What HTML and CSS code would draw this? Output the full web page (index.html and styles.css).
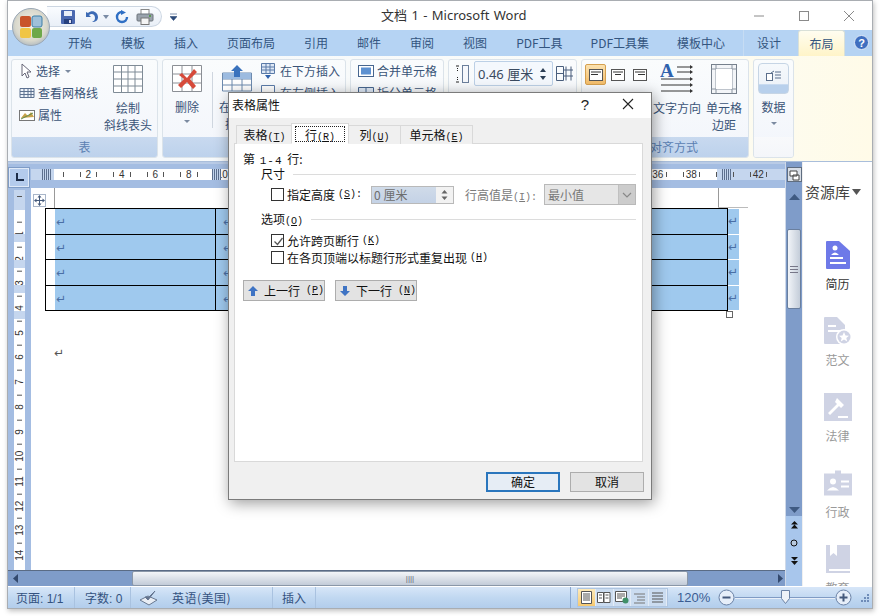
FILE: index.html
```html
<!DOCTYPE html>
<html lang="zh">
<head>
<meta charset="utf-8">
<title>文档 1 - Microsoft Word</title>
<link rel="stylesheet" href="styles.css">
</head>
<body>
<div class="win">
  <header class="title">
    <span class="title-text">文档 1 - Microsoft Word</span>
    <div class="wctl">
      <svg width="12" height="12" viewBox="0 0 12 12"><path d="M1 6h10" stroke="#8a8a8a"/></svg>
      <svg width="12" height="12" viewBox="0 0 12 12"><rect x="1.5" y="1.5" width="9" height="9" fill="none" stroke="#8a8a8a"/></svg>
      <svg width="12" height="12" viewBox="0 0 12 12"><path d="M1 1l10 10M11 1L1 11" stroke="#8a8a8a"/></svg>
    </div>
  </header>

  <div class="office">
    <svg width="38" height="38" viewBox="0 0 38 38">
      <defs><radialGradient id="ob" cx=".5" cy=".45" r=".6"><stop offset="0" stop-color="#f7f4ea"/><stop offset=".7" stop-color="#d9d8cc"/><stop offset="1" stop-color="#a9b4bd"/></radialGradient></defs>
      <circle cx="19" cy="19" r="18.5" fill="url(#ob)" stroke="#9aa7b5"/>
      <rect x="8" y="8" width="11" height="11" rx="2" fill="#c9542a"/>
      <rect x="20" y="8" width="10" height="11" rx="2" fill="#9fc0d8" stroke="#3d7fa8"/>
      <rect x="8" y="20" width="11" height="10" rx="2" fill="#f0c544"/>
      <rect x="20" y="20" width="10" height="10" rx="2" fill="#6ea84a"/>
    </svg>
  </div>
  <div class="qat">
    <svg width="16" height="16" viewBox="0 0 16 16"><rect x="1" y="1" width="14" height="14" rx="1" fill="#4a68b0"/><rect x="4" y="2" width="8" height="5" fill="#e8eef8"/><rect x="4" y="10" width="8" height="5" fill="#26407e"/><rect x="9" y="11" width="2" height="3" fill="#dde"/></svg>
    <svg width="16" height="14" viewBox="0 0 16 14"><path d="M3 2v5h5L6 5c3-2 6-.5 6 3 0 2-1 3-3 4 4 0 6-2 6-5C15 2 9-1 5 3z" fill="#3d6bb5"/></svg>
    <svg class="qat-d" width="6" height="4" viewBox="0 0 6 4"><path d="M0 0h6L3 4z" fill="#7a8ba5"/></svg>
    <svg width="14" height="14" viewBox="0 0 14 14"><path d="M7 2a5 5 0 1 0 5 5" fill="none" stroke="#2f6fc4" stroke-width="2.4"/><path d="M6 0l5 2.5L6 5z" fill="#2f6fc4"/></svg>
    <svg width="18" height="16" viewBox="0 0 18 16"><rect x="5" y="0.5" width="8" height="5" fill="#fff" stroke="#888"/><rect x="1" y="5" width="16" height="7" rx="1" fill="#9aa3ad" stroke="#6d747c"/><rect x="5" y="9" width="8" height="6.5" fill="#f4f4f4" stroke="#777"/><rect x="13" y="6" width="2" height="2" fill="#5a9a50"/></svg>
  </div>
  <svg class="qat-more" width="7" height="8" viewBox="0 0 7 8"><path d="M0 1h7M0 3.500h7L3.500 7.500z" fill="#2c4a78" stroke="#2c4a78" stroke-width=".6"/></svg>

  <nav class="tabs">
    <span class="tab">开始</span><span class="tab">模板</span><span class="tab">插入</span><span class="tab">页面布局</span><span class="tab">引用</span><span class="tab">邮件</span><span class="tab">审阅</span><span class="tab">视图</span><span class="tab t-pdf">PDF工具</span><span class="tab t-pdfs">PDF工具集</span><span class="tab t-tpl">模板中心</span>
    <span class="tab ctx">设计</span><span class="tab active">布局</span>
    <svg class="help" width="15" height="15" viewBox="0 0 15 15"><circle cx="7.500" cy="7.500" r="7" fill="#3f6fc0" stroke="#dfe9f7"/><text x="7.500" y="11.500" text-anchor="middle" class="help-q">?</text></svg>
  </nav>

  <section class="ribbon">
    <div class="grp g1">
      <div class="grp-body">
        <div class="col-small">
          <div class="sm"><svg width="14" height="16" viewBox="0 0 14 16"><path d="M3 1v12l3-3 2 5 2-1-2-5h4z" fill="#fff" stroke="#667"/></svg>选择 <i class="caret"></i></div>
          <div class="sm"><svg width="16" height="14" viewBox="0 0 16 14"><path d="M1 2.500h14v9H1zM5 2.500v9M9 2.500v9M12 2.500v9M1 5.500h14M1 8.500h14" fill="#eef3fa" stroke="#5d7291"/></svg>查看网格线</div>
          <div class="sm"><svg width="16" height="14" viewBox="0 0 16 14"><rect x=".5" y="2.500" width="15" height="10" fill="#fff" stroke="#777"/><path d="M2 10l4-5 3 3 3-4 3 5z" fill="#c9a24b"/><path d="M2 11l12-6" stroke="#5d8a4a"/></svg>属性</div>
        </div>
        <div class="big w-b1">
          <svg width="30" height="28" viewBox="0 0 30 28"><path d="M.5.500h29v27H.5zM8.500.500v27M15 .500v27M22 .500v27M.5 7h29M.5 14h29M.5 21h29" fill="#fff" stroke="#7f8b96"/></svg>
          <span class="big-l">绘制<br>斜线表头</span>
        </div>
      </div>
      <div class="foot">表</div>
    </div>

    <div class="grp g2">
      <div class="grp-body">
        <div class="big w-b2">
          <svg width="30" height="27" viewBox="0 0 30 27"><path d="M.5.500h29v26H.5zM10 .500v26M20 .500v26M.5 9h29M.5 18h29" fill="#fff" stroke="#8b8f95"/><path d="M10 8l5 5 7-9 3 3-7 7 6 7-3 3-6-7-6 6-3-3 6-6-5-4z" fill="#d64a3a"/></svg>
          <span class="big-l">删除</span>
          <i class="caret c-big"></i>
        </div>
        <div class="vsep"></div>
        <div class="big w-b3">
          <svg width="30" height="27" viewBox="0 0 30 27"><path d="M.5 8h29v18H.5zM10 8v18M20 8v18M.5 14h29M.5 20h29" fill="#fff" stroke="#6d8aae"/><rect x="1" y="8" width="28" height="6" fill="#9cbbe0"/><path d="M15 0l6 6h-3v6h-6V6H9z" fill="#3a72bd"/></svg>
          <span class="big-l">在上方<br>插入</span>
        </div>
        <div class="col-small c-ins">
          <div class="sm"><svg width="14" height="16" viewBox="0 0 14 16"><path d="M.5.500h13v10H.5zM5 .500v10M9 .500v10M.5 4h13M.5 7h13" fill="#dfe9f6" stroke="#5b7ba8"/><path d="M7 16l-3-4h6z" fill="#2f62ad"/></svg>在下方插入</div>
          <div class="sm"><svg width="14" height="16" viewBox="0 0 14 16"><path d="M.5.500h13v13H.5z" fill="#fff" stroke="#5b7ba8"/></svg>在左侧插入</div>
        </div>
      </div>
      <div class="foot"></div>
    </div>

    <div class="grp g3">
      <div class="grp-body">
        <div class="col-small">
          <div class="sm"><svg width="16" height="14" viewBox="0 0 16 14"><rect x=".5" y="1.500" width="15" height="11" fill="#fff" stroke="#47668f"/><rect x="3" y="3.500" width="10" height="7" fill="#5d91d1"/></svg>合并单元格</div>
          <div class="sm"><svg width="16" height="14" viewBox="0 0 16 14"><path d="M.5 1.500h15v11H.5zM8 1.500v11" fill="#dfe9f6" stroke="#47668f"/></svg>拆分单元格</div>
        </div>
      </div>
      <div class="foot"></div>
    </div>

    <div class="grp g4">
      <div class="grp-body">
        <div class="hrow">
          <svg width="14" height="18" viewBox="0 0 14 18"><path d="M4 1h-3M4 17H1" stroke="#222"/><path d="M2.500 3v3M2.500 15v-3" stroke="#222" stroke-dasharray="1 1"/><rect x="7.500" y=".5" width="6" height="17" fill="#f6f8fc" stroke="#6b7f9c"/></svg>
          <div class="spin"><span>0.46 厘米</span><svg width="8" height="18" viewBox="0 0 8 18"><path d="M4 3L1 7h6zM4 15l-3-4h6z" fill="#2c3e55"/></svg></div>
          <svg width="17" height="15" viewBox="0 0 17 15"><path d="M.5.500h7v14h-7zM.5 7.500h7M10 .500v14M15 .500v14M8 4h9M8 10h9" fill="none" stroke="#4a5f7d"/></svg>
        </div>
      </div>
      <div class="foot"></div>
    </div>

    <div class="grp g5">
      <div class="grp-body">
        <div class="aligns">
          <span class="al on"><svg width="14" height="12" viewBox="0 0 14 12"><rect x=".5" y=".5" width="13" height="11" fill="#fff" stroke="#555"/><path d="M2 3h10M2 5.500h7" stroke="#333"/></svg></span>
          <span class="al"><svg width="14" height="12" viewBox="0 0 14 12"><rect x=".5" y=".5" width="13" height="11" fill="#fff" stroke="#555"/><path d="M2 3h10M4 5.500h6" stroke="#333"/></svg></span>
          <span class="al"><svg width="14" height="12" viewBox="0 0 14 12"><rect x=".5" y=".5" width="13" height="11" fill="#fff" stroke="#555"/><path d="M2 3h10M5 5.500h7" stroke="#333"/></svg></span>
        </div>
        <div class="big w-b4">
          <svg width="34" height="32" viewBox="0 0 34 32"><text x="0" y="14" class="bigA">A</text><path d="M17 4h13M17 9h13M1 16h29M1 22h29M1 28h29" stroke="#333"/><path d="M30 2l3 2-3 2zM30 7l3 2-3 2zM30 14l3 2-3 2zM30 20l3 2-3 2zM30 26l3 2-3 2z" fill="#333"/></svg>
          <span class="big-l">文字方向</span>
        </div>
        <div class="big w-b5">
          <svg width="26" height="30" viewBox="0 0 26 30"><rect x=".5" y=".5" width="25" height="29" fill="#f3f5f8" stroke="#76808c"/><path d="M.5 5h25M.5 25h25M5 .5v29M21 .5v29" stroke="#8a94a0"/><rect x="5" y="5" width="16" height="20" fill="#fff"/></svg>
          <span class="big-l">单元格<br>边距</span>
        </div>
      </div>
      <div class="foot foot-r">对齐方式</div>
    </div>

    <div class="grp g6">
      <div class="grp-body">
        <div class="big w-b6">
          <span class="data-btn"><svg width="16" height="11" viewBox="0 0 16 11"><rect x=".5" y="3.500" width="6" height="7" fill="#fff" stroke="#5b6f8c"/><path d="M9 2h6M9 5h6M9 8h6" stroke="#5b6f8c"/><path d="M5 3l3-2" stroke="#5b6f8c"/></svg></span>
          <span class="big-l">数据</span>
          <i class="caret c-big"></i>
        </div>
      </div>
      <div class="foot foot-e"></div>
    </div>
  </section>

  <div class="main">
    <div class="doc">
      <div class="hr">
        <span class="corner"><svg width="11" height="11" viewBox="0 0 11 11"><path d="M3 1v7h7" fill="none" stroke="#1d2c47" stroke-width="2"/></svg></span>
        <div class="hr-track">
          <span class="n first"></span><span class="n">2</span><span class="n">4</span><span class="n">6</span><span class="n">8</span><span class="n">10</span><span class="n">12</span><span class="n">14</span><span class="n">16</span><span class="n">18</span><span class="n">20</span><span class="n">22</span><span class="n">24</span><span class="n">26</span><span class="n">28</span><span class="n">30</span><span class="n">32</span><span class="n">34</span><span class="n">36</span><span class="n">38</span><span class="n"></span><span class="n">42</span>
          <i class="mark m1"></i><i class="mark m2"></i><i class="mark m3"></i>
        </div>
      </div>
      <div class="doc-row">
        <div class="vr">
          <div class="vr-top"><b></b></div>
          <div class="vr-track">
            <span class="v">1</span><span class="v">2</span><span class="v">3</span><span class="v">4</span><span class="v">5</span><span class="v">6</span><span class="v">7</span><span class="v">8</span><span class="v">9</span><span class="v">10</span><span class="v">11</span><span class="v">12</span><span class="v">13</span><span class="v">14</span>
            <i class="vm a"></i><i class="vm b"></i><i class="vm c"></i><i class="vm d"></i>
          </div>
        </div>
        <div class="page">
          <i class="guide gl"></i><i class="guide gr"></i>
          <span class="move"><svg width="11" height="11" viewBox="0 0 11 11"><path d="M5.500 0l2 2.500h-1.500v2.500h2.500v-1.500l2.500 2-2.500 2v-1.500h-2.500v2.500h1.500l-2 2.500-2-2.500h1.500v-2.500h-2.500v1.500l-2.500-2 2.500-2v1.500h2.500v-2.500h-1.500z" fill="#44597a"/></svg></span>
          <table class="tbl">
            <tr><td class="c1"><div class="fill"><span class="pm">↵</span></div></td><td class="c2"><div class="fill2"><span class="pm">↵</span></div></td><td class="end"><span class="pm">↵</span></td></tr>
            <tr><td class="c1"><div class="fill"><span class="pm">↵</span></div></td><td class="c2"><div class="fill2"><span class="pm">↵</span></div></td><td class="end"><span class="pm">↵</span></td></tr>
            <tr><td class="c1"><div class="fill"><span class="pm">↵</span></div></td><td class="c2"><div class="fill2"><span class="pm">↵</span></div></td><td class="end"><span class="pm">↵</span></td></tr>
            <tr><td class="c1"><div class="fill"><span class="pm">↵</span></div></td><td class="c2"><div class="fill2"><span class="pm">↵</span></div></td><td class="end"><span class="pm">↵</span></td></tr>
          </table>
          <i class="resize"></i>
          <p class="para"><span class="pm grey">↵</span></p>
        </div>
      </div>
      <div class="hs">
        <svg class="arr" width="5" height="9" viewBox="0 0 5 9"><path d="M5 0v9L0 4.500z" fill="#33496e"/></svg>
        <div class="hs-thumb"><span class="grip">||||</span></div>
        <svg class="arr" width="5" height="9" viewBox="0 0 5 9"><path d="M0 0v9l5-4.500z" fill="#33496e"/></svg>
      </div>
    </div>

    <div class="vs">
      <svg class="split" width="15" height="15" viewBox="0 0 15 15"><rect x=".5" y=".5" width="14" height="14" fill="#d8dee6" stroke="#5f6d80"/><path d="M3 4h7v5H3zM6 8h6v5H6z" fill="#fff" stroke="#444"/></svg>
      <svg class="up" width="11" height="6" viewBox="0 0 11 6"><path d="M5.500 0L11 6H0z" fill="#3f5a82"/></svg>
      <div class="vs-thumb"><span class="vgrip"></span></div>
      <div class="vs-fill"></div>
      <svg class="dn" width="11" height="6" viewBox="0 0 11 6"><path d="M0 0h11L5.500 6z" fill="#3f5a82"/></svg>
      <div class="vs-nav">
        <svg width="7" height="8" viewBox="0 0 8 9"><path d="M4 0l4 4H0zM4 4l4 4.500H0z" fill="#111"/></svg>
        <svg width="8" height="8" viewBox="0 0 8 8"><circle cx="4" cy="4" r="3" fill="#b8c8dc" stroke="#111"/></svg>
        <svg width="7" height="8" viewBox="0 0 8 9"><path d="M0 0h8L4 4zM0 4.500h8L4 9z" fill="#111"/></svg>
      </div>
    </div>

    <aside class="lib">
      <div class="lib-h">资源库<svg width="9" height="6" viewBox="0 0 9 6"><path d="M0 0h9L4.500 6z" fill="#555"/></svg></div>
      <div class="lib-i on">
        <svg width="24" height="28" viewBox="0 0 24 28"><path d="M0 1q0-1 1-1h12l11 10v17q0 1-1 1H1q-1 0-1-1z" fill="#6e79e8"/><circle cx="9" cy="7" r="2.500" fill="#fff"/><path d="M5 14q4-5 8 0zM4 16h13v2H4zM4 21h16v2H4z" fill="#fff"/></svg>
        <span>简历</span>
      </div>
      <div class="lib-i">
        <svg width="28" height="28" viewBox="0 0 28 28"><path d="M0 1q0-1 1-1h12l8 8v19H1q-1 0-1-1z" fill="#cfd3e4"/><path d="M4 8h8v2H4zM4 13h12v2H4z" fill="#fff"/><circle cx="20" cy="20" r="8" fill="#fff"/><circle cx="20" cy="20" r="6.500" fill="#cfd3e4"/><path d="M20 15l1.500 3.500 3.500.3-2.700 2.300.9 3.400-3.200-1.900-3.200 1.900.9-3.400-2.700-2.300 3.500-.3z" fill="#fff"/></svg>
        <span>范文</span>
      </div>
      <div class="lib-i">
        <svg width="28" height="28" viewBox="0 0 28 28"><rect width="28" height="28" fill="#cfd3e4"/><path d="M13 5l7 7-3 3-2-2-9 9-2-2 9-9-2-2zM14 23h10v2H14z" fill="#fff"/></svg>
        <span>法律</span>
      </div>
      <div class="lib-i">
        <svg width="28" height="25" viewBox="0 0 28 25"><path d="M0 3h11V0h6v3h11v22H0z" fill="#cfd3e4"/><circle cx="9" cy="11" r="3" fill="#fff"/><path d="M3 20q6-7 12 0zM17 10h8v2h-8zM17 15h8v2h-8z" fill="#fff"/></svg>
        <span>行政</span>
      </div>
      <div class="lib-i">
        <svg width="24" height="28" viewBox="0 0 24 28"><path d="M0 0h24v24H3v2h21v2H0z" fill="#cfd3e4"/><path d="M4 0h7v11l-3.500-3-3.500 3z" fill="#fff"/></svg>
        <span>教育</span>
      </div>
    </aside>
  </div>

  <footer class="status">
    <span class="st s1">页面: 1/1</span>
    <span class="st s2">字数: 0</span>
    <span class="st s3"><svg width="20" height="16" viewBox="0 0 20 16"><path d="M1 10l8-4 9 4-8 5z" fill="#e8edf4" stroke="#687890"/><path d="M6 7l3 3 7-9-6 6z" fill="#63748f" stroke="#63748f"/></svg></span>
    <span class="st s4">英语(美国)</span>
    <span class="st s5">插入</span>
    <span class="st-fill"></span>
    <div class="views">
      <span class="vb on"><svg width="13" height="13" viewBox="0 0 13 13"><path d="M1.500.5h10v12h-10z" fill="#fff" stroke="#555"/><path d="M3 3h7M3 5h7M3 7h7M3 9h7" stroke="#555"/></svg></span>
      <span class="vb"><svg width="14" height="13" viewBox="0 0 14 13"><path d="M.5 1.500h6v10h-6zM7 1.500h6v10H7z" fill="#fff" stroke="#555"/><path d="M2 4h3M2 7h3M8.500 4h3M8.500 7h3" stroke="#555"/></svg></span>
      <span class="vb"><svg width="14" height="13" viewBox="0 0 14 13"><path d="M.5.500h11v10H.5z" fill="#fff" stroke="#555"/><path d="M2 3h8M2 5h8M2 7h5" stroke="#555"/><circle cx="10.500" cy="9.500" r="3" fill="#3f8f68"/></svg></span>
      <span class="vb"><svg width="13" height="13" viewBox="0 0 13 13"><path d="M1 3h11M4 6h8M4 9h8M1 12h11" stroke="#777"/></svg></span>
      <span class="vb"><svg width="13" height="13" viewBox="0 0 13 13"><path d="M1 2h11M1 5h11M1 8h11M1 11h11" stroke="#555"/></svg></span>
    </div>
    <span class="zoomv">120%</span>
    <svg width="17" height="17" viewBox="0 0 17 17"><circle cx="8.500" cy="8.500" r="7.500" fill="#e6eef9" stroke="#6b82a6"/><path d="M4.500 8.500h8" stroke="#44597c" stroke-width="2"/></svg>
    <div class="slider"><svg class="thumb" width="9" height="14" viewBox="0 0 9 14"><path d="M.5.500h8v8L4.500 13.500.5 8.500z" fill="#eef2f8" stroke="#6b82a6"/></svg></div>
    <svg width="17" height="17" viewBox="0 0 17 17"><circle cx="8.500" cy="8.500" r="7.500" fill="#e6eef9" stroke="#6b82a6"/><path d="M4.500 8.500h8M8.500 4.500v8" stroke="#44597c" stroke-width="2"/></svg>
    <svg class="sgrip" width="10" height="10" viewBox="0 0 10 10"><path d="M7 1h2v2H7zM4 4h2v2H4zM7 4h2v2H7zM1 7h2v2H1zM4 7h2v2H4zM7 7h2v2H7z" fill="#6f8cb8"/></svg>
  </footer>
</div>

<div class="dlg">
  <div class="dlg-t">
    <span class="dlg-title">表格属性</span>
    <span class="dlg-q">?</span>
    <svg width="12" height="12" viewBox="0 0 12 12"><path d="M1 1l10 10M11 1L1 11" stroke="#222" stroke-width="1.100"/></svg>
  </div>
  <div class="dlg-b">
    <div class="dtabs">
      <span class="dt t1">表格<span class="hk">(<u>T</u>)</span></span>
      <span class="dt t2 sel"><span class="focus">行<span class="hk">(<u>R</u>)</span></span></span>
      <span class="dt t3">列<span class="hk">(<u>U</u>)</span></span>
      <span class="dt t4">单元格<span class="hk">(<u>E</u>)</span></span>
    </div>
    <div class="panel">
      <div class="p-top">第 <span class="hk num">1-4</span> 行:</div>
      <div class="fs">尺寸<i></i></div>
      <div class="row-size">
        <label class="chk"><b class="box"></b>指定高度<span class="hk">(<u>S</u>):</span></label>
        <div class="inp"><span class="inp-v">0 厘米</span><span class="inp-s"><svg width="7" height="12" viewBox="0 0 7 12"><path d="M3.500 1L.5 4.500h6zM3.500 11L.5 7.500h6z" fill="#666"/></svg></span></div>
        <span class="dis">行高值是<span class="hk">(<u>I</u>):</span></span>
        <div class="sel-box"><span>最小值</span><span class="sel-a"><svg width="10" height="6" viewBox="0 0 10 6"><path d="M1 1l4 4 4-4" fill="none" stroke="#888" stroke-width="1.200"/></svg></span></div>
      </div>
      <div class="fs fs2"><span>选项<span class="hk">(<u>O</u>)</span></span><i></i></div>
      <label class="chk c-opt"><b class="box"><svg width="13" height="13" viewBox="0 0 13 13"><path d="M2.500 6.500l3 3 5-6.500" fill="none" stroke="#555" stroke-width="1.300"/></svg></b>允许跨页断行<span class="hk">(<u>K</u>)</span></label>
      <label class="chk c-opt2"><b class="box"></b>在各页顶端以标题行形式重复出现<span class="hk">(<u>H</u>)</span></label>
      <div class="prevnext">
        <span class="btn pn"><svg width="10" height="10" viewBox="0 0 10 10"><path d="M5 0l5 5H7v5H3V5H0z" fill="#3f74c4"/></svg>上一行<span class="hk">(<u>P</u>)</span></span>
        <span class="btn pn"><svg width="10" height="10" viewBox="0 0 10 10"><path d="M5 10L0 5h3V0h4v5h3z" fill="#3f74c4"/></svg>下一行<span class="hk">(<u>N</u>)</span></span>
      </div>
    </div>
    <div class="dlg-f">
      <span class="btn ok">确定</span>
      <span class="btn">取消</span>
    </div>
  </div>
</div>
</body>
</html>
```
FILE: styles.css
```css
* { box-sizing: border-box; }
html, body { margin: 0; padding: 0; background: #fff; }
body {
  width: 880px; height: 616px; overflow: hidden; position: relative;
  font: 12px "Noto Sans CJK SC", "Liberation Sans", sans-serif;
  color: #2f4a75;
}
svg { display: block; flex: none; }
i { font-style: normal; display: block; }

.win {
  position: relative; margin-left: 7px; width: 866px; height: 609px;
  border: 1px solid #a9adb2; background: #fff;
  box-shadow: 1px 2px 5px rgba(0,0,0,.25);
  display: flex; flex-direction: column; overflow: hidden;
}

/* title */
.title { height: 29px; flex: none; display: flex; align-items: center; position: relative; }
.title-text { margin-left: 373px; font-size: 13px; color: #333; line-height: 29px; word-spacing: 1px; font-family: "Noto Sans", "Noto Sans CJK SC", sans-serif; }
.wctl { margin-left: auto; margin-right: 17px; display: flex; gap: 33px; }

.office { position: absolute; left: 4px; top: 7px; z-index: 3; width: 38px; height: 38px; }
.qat {
  position: absolute; left: 39px; top: 5px; height: 21px; width: 115px;
  border: 1px solid #ccd6e2; border-left: 0; border-radius: 0 11px 11px 0;
  background: linear-gradient(#fafcff,#e9eff7);
  display: flex; align-items: center; gap: 7px; padding-left: 13px; z-index: 2;
}
.qat-d { margin-left: -3px; margin-right: -1px; }
.qat-more { position: absolute; left: 162px; top: 12px; }

/* tabs */
.tabs { height: 26px; flex: none; display: flex; align-items: stretch; padding-left: 60px; background: #b5d3f3; position: relative; }
.tab { margin-right: 29px; line-height: 26px; color: #33557f; white-space: nowrap; }
.t-pdf { margin-right: 28px; }
.t-pdfs { margin-right: 28px; }
.t-tpl { margin-right: 18px; }
.tab.ctx { margin-right: 17px; padding: 0 0 0 13px; border-left: 1px solid #c6dcf3; }
.tab.active { margin-right: 0; width: 47px; text-align: center; border-radius: 3px 3px 0 0; background: linear-gradient(#fffdf0,#fff4c8); border: 1px solid #d9e0d8; border-bottom: 0; }
.help { margin: 5px 0 0 9px; }
.help-q { font: bold 11px "Liberation Sans", sans-serif; fill: #fff; }

/* ribbon */
.ribbon {
  height: 106px; flex: none; display: flex; gap: 4px; padding: 3px;
  background: linear-gradient(90deg,#f4f8fc 0,#fbfcf9 70%,#fffbe8 100%);
  border-bottom: 1px solid #a9bedb;
}
.grp { border: 1px solid #dbe3ea; border-radius: 3px; display: flex; flex-direction: column; background: linear-gradient(#fafcfd,#f2f5fb); flex: none; overflow: hidden; }
.grp-body { flex: 1; display: flex; position: relative; min-height: 0; }
.foot { height: 20px; flex: none; background: linear-gradient(#c8d9ef,#bdd2ec); text-align: center; line-height: 20px; color: #5b80b2; }
.foot-e { background: linear-gradient(#f8f9fb,#f4f6fa); }
.g1 { width: 147px; } .g2 { width: 184px; } .g3 { width: 94px; } .g4 { width: 129px; } .g5 { width: 168px; } .g6 { width: 41px; }

.col-small { display: flex; flex-direction: column; padding: 1px 0 0 7px; gap: 2px; }
.sm { height: 20px; display: flex; align-items: center; gap: 3px; white-space: nowrap; color: #3a5478; line-height: 20px; }
.caret { width: 0; height: 0; border: 3px solid transparent; border-top: 3px solid #7b8aa0; border-bottom: 0; margin-left: 2px; display: inline-block; }
.c-big { margin: 5px 0 0; }
.big { display: flex; flex-direction: column; align-items: center; padding-top: 5px; color: #3a5478; }
.big-l { margin-top: 6px; line-height: 17px; text-align: center; white-space: nowrap; }
.w-b1 { position: relative; margin-left: 5px; width: 50px; }
.w-b2 { margin-left: 9px; width: 30px; }
.vsep { width: 1px; height: 56px; margin: 12px 9px 0 10px; background: #cfd6df; }
.w-b3 { width: 30px; }
.c-ins { padding-left: 9px; }
.c-ins .sm { gap: 5px; }
.hrow { display: flex; align-items: center; padding: 0 0 0 6px; gap: 5px; height: 27px; }
.spin { width: 79px; height: 25px; padding: 0 5px 0 3px; border: 1px solid #bcd0e6; border-radius: 2px; background: #f4f8fd; display: flex; align-items: center; justify-content: space-between; color: #3a4a60; font-size: 13px; font-family: "Noto Sans", "Noto Sans CJK SC", sans-serif; }
.spin + svg { margin-left: -2px; }
.aligns { display: flex; padding: 4px 0 0 3px; gap: 1px; height: 30px; }
.al { width: 21px; height: 21px; display: flex; align-items: center; justify-content: center; border-radius: 2px; }
.al.on { background: linear-gradient(#fbe2b0,#f4bd6a); border: 1px solid #d5a04f; }
.w-b4 { width: 50px; margin-left: 2px; padding-top: 3px; }
.w-b4 .big-l { margin-top: 4px; }
.w-b5 { width: 36px; margin-left: 4px; padding-top: 4px; }
.w-b5 .big-l { margin-top: 5px; }
.bigA { font: bold 19px "Liberation Serif", serif; fill: #2f62ad; }
.foot-r { padding-left: 18px; }
.w-b6 { width: 39px; padding-top: 3px; }
.data-btn { width: 31px; height: 31px; border: 1px solid #c6d5e5; border-radius: 4px; background: linear-gradient(#f6f9fc 0,#eef3f9 70%,#b8d0ec 71%,#b8d0ec 100%); display: flex; justify-content: center; padding-top: 6px; }
.w-b6 .big-l { margin-top: 4px; }
.w-b6 .c-big { margin-top: 7px; }

/* main */
.main { flex: 1; min-height: 0; display: flex; background: #fff; }
.doc { width: 777px; flex: none; display: flex; flex-direction: column; position: relative; }
.hr { height: 26px; flex: none; display: flex; background: #a4bde2; padding-top: 3px; border-top: 2px solid #b9cbe6; }
.corner { width: 22px; height: 21px; background: #b4cbec; border: 1px solid #7f9cc6; display: flex; align-items: center; justify-content: center; flex: none; box-shadow: inset 0 0 0 1px #dfe9f7; }
.hr-track {
  position: relative; flex: 1; height: 11px; margin-top: 2px; margin-left: 1px; padding-left: 7px;
  display: flex; font: 10px/11px "Liberation Sans", sans-serif; color: #333; overflow: visible;
  background: linear-gradient(90deg,#c5d6ee 0,#c5d6ee 23px,#fff 23px,#fff 686px,#c5d6ee 686px);
}
.n { width: 33.5px; flex: none; text-align: center; position: relative; }
.n::before, .n::after { content: ""; position: absolute; top: 3px; height: 5px; width: 1px; background: #555; }
.n::before { left: 8px; } .n::after { right: 8px; }
.n.first::before { display: none; }
.mark { position: absolute; top: 0; width: 9px; height: 11px; background: repeating-linear-gradient(90deg,#5d708e 0 1px,#c5d6ee 1px 2px); }
.m1 { left: 11px; } .m2 { left: 181px; } .m3 { left: 691px; }

.doc-row { flex: 1; min-height: 0; display: flex; }
.vr { width: 23px; flex: none; background: #a4bde2; padding: 0 6px; display: flex; flex-direction: column; overflow: hidden; }
.vr-top { height: 20px; flex: none; background: #c5d6ee; margin-top: 2px; position: relative; }
.vr-top b { position: absolute; left: 3px; top: 6px; width: 5px; height: 1px; background: #555; }
.vr-track { flex: 1; background: #fff; padding-top: 12px; position: relative; font: 10px/11px "Liberation Sans", sans-serif; color: #333; }
.v { display: flex; align-items: center; justify-content: center; height: 24.7px; writing-mode: vertical-rl; transform: rotate(180deg); position: relative; }
.v::after { content: ""; position: absolute; left: 3px; bottom: 0; width: 5px; height: 1px; background: #555; }
.vm { position: absolute; left: 0; width: 100%; height: 8px; background: #c5d6ee; }
.vm.a { top: 24px; } .vm.b { top: 50px; } .vm.c { top: 75px; } .vm.d { top: 101px; }

.page { flex: 1; background: #fff; position: relative; padding: 20px 0 0 14px; overflow: hidden; min-width: 0; }
.guide { position: absolute; background: #999; }
.gl { left: 23px; top: 0; width: 1px; height: 20px; }
.gr { left: 687px; top: 0; width: 1px; height: 20px; }
.gr::after { content: ""; position: absolute; left: 0; top: 19px; width: 30px; height: 1px; background: #bbb; }
.move { position: absolute; left: 2px; top: 6px; width: 13px; height: 13px; border: 1px solid #a9b6c9; background: #fff; display: flex; align-items: center; justify-content: center; }
.tbl { border-collapse: collapse; table-layout: fixed; width: 693px; }
.tbl td { padding: 0; height: 25.6px; }
.c1 { width: 170px; border: 1px solid #000; }
.c2 { width: 512px; border: 1px solid #000; }
.fill { margin-left: 9px; height: 24.6px; background: #9fc9ee; line-height: 24px; }
.fill2 { height: 24.6px; background: #9fc9ee; line-height: 24px; }
.pm { font: 12px/24px "DejaVu Sans", sans-serif; color: #4a6fa5; padding-left: 1px; }
.pm.grey { color: #555; padding-left: 0; }
.fill2 .pm { padding-left: 7px; }
.end { width: 11px; background: #9fc9ee; border-top: 1px solid #fff; border-bottom: 1px solid #fff; }
.end .pm { padding-left: 0; }
.resize { position: absolute; left: 695px; top: 123px; width: 7px; height: 7px; border: 1px solid #666; background: #fff; }
.para { margin: 30px 0 0 9px; line-height: 14px; }

.hs { height: 16px; flex: none; display: flex; align-items: center; background: #7f9cc9; padding: 0 2px 0 5px; border-top: 1px solid #5a6b85; }
.hs-thumb { margin-left: 114px; margin-right: 90px; flex: 1; height: 15px; background: linear-gradient(#f3f5f8,#c2cbd8); border: 1px solid #8a97a8; border-radius: 2px; text-align: center; font: 8px/13px "Liberation Sans", sans-serif; color: #667; }

.vs { width: 17px; flex: none; background: #7f9cc9; display: flex; flex-direction: column; align-items: center; position: relative; border-left: 1px solid #cfd9e8; }
.split { margin-top: 5px; }
.up { margin-top: 12px; }
.vs-thumb { margin-top: 29px; width: 14px; height: 80px; border: 1px solid #6a7f9e; border-radius: 2px; background: linear-gradient(90deg,#f1f4f8,#c4cdd9); display: flex; align-items: center; justify-content: center; }
.vgrip { width: 8px; height: 7px; border-top: 1px solid #778; border-bottom: 1px solid #778; position: relative; }
.vgrip::after { content: ""; position: absolute; left: 0; right: 0; top: 2px; height: 1px; background: #778; }
.vs-fill { flex: 1; }
.dn { margin-bottom: 3px; }
.vs-nav { width: 16px; height: 70px; background: #a8c6ec; display: flex; flex-direction: column; align-items: center; gap: 10px; padding-top: 5px; }

.lib { flex: 1; background: #fff; overflow: hidden; display: flex; flex-direction: column; border-left: 1px solid #f0f0f0; }
.lib-h { height: 57px; flex: none; padding: 19px 0 0 2px; font-size: 15px; line-height: 22px; color: #444; display: flex; gap: 2px; align-items: flex-start; white-space: nowrap; }
.lib-h svg { margin-top: 8px; }
.lib-i { height: 76px; flex: none; display: flex; flex-direction: column; align-items: center; padding-top: 22px; color: #9a9a9a; line-height: 17px; }
.lib-i svg { height: 28px; }
.lib-i span { margin-top: 6px; }
.lib-i.on { color: #333; }

/* status */
.status {
  height: 22px; flex: none; display: flex; align-items: center;
  background: linear-gradient(#d7e6f8,#c1d8f1 50%,#b2cdec);
  border-top: 1px solid #fff; color: #34527f; position: relative; z-index: 1;
}
.st { height: 100%; flex: none; display: flex; align-items: center; border-right: 1px solid #a9c2e0; white-space: nowrap; }
.s1 { width: 67px; padding-left: 8px; font-family: "Liberation Sans", "Noto Sans CJK SC", sans-serif; }
.s2 { width: 56px; padding-left: 10px; font-family: "Liberation Sans", "Noto Sans CJK SC", sans-serif; }
.s3 { width: 41px; padding-left: 8px; border-right: 0; }
.s4 { width: 101px; letter-spacing: .5px; }
.s5 { width: 43px; padding-left: 9px; }
.st-fill { width: 255px; flex: none; height: 100%; border-right: 1px solid #8ba8cf; }
.views { width: 91px; flex: none; margin-left: 6px; height: 19px; display: flex; align-items: center; background: #cbdcf0; border: 1px solid #afc5e0; }
.vb { width: 18px; height: 17px; display: flex; align-items: center; justify-content: center; border-right: 1px solid #e2ebf6; }
.vb.on { background: linear-gradient(#fde9b8,#f6c971); }
.zoomv { width: 41px; flex: none; margin-left: 9px; font: 13px "Liberation Sans", sans-serif; color: #3a5c92; }
.slider { width: 100px; height: 2px; background: #e8eff9; border-top: 1px solid #7f9bc4; position: relative; flex: none; }
.thumb { position: absolute; left: 46px; top: -8px; }
.sgrip { margin-left: 8px; }

/* dialog */
.dlg {
  position: absolute; left: 228px; top: 92px; width: 424px; height: 408px;
  border: 1px solid #7b7b7b; background: #f0f0f0; z-index: 10;
  box-shadow: 2px 3px 14px rgba(0,0,0,.4);
  display: flex; flex-direction: column; color: #111;
}
.dlg-t { height: 25px; flex: none; background: #fff; display: flex; align-items: center; padding: 0 17px 3px 3px; }
.dlg-title { font-size: 12px; color: #111; }
.dlg-q { margin-left: auto; margin-right: 33px; font: 15px "Liberation Sans", sans-serif; color: #222; }
.dlg-b { flex: 1; padding: 4px 8px 7px 5px; display: flex; flex-direction: column; min-height: 0; }
.hk { font: 10px "Liberation Mono", monospace; }
.hk.num { font-size: 11px; letter-spacing: 1px; margin: 0 2px; }
.dtabs { display: flex; height: 22px; flex: none; padding-left: 2px; align-items: flex-end; position: relative; z-index: 1; margin-bottom: -1px; }
.dt { height: 19px; line-height: 18px; text-align: center; background: #f0f0f0; border: 1px solid #d9d9d9; border-bottom: 0; margin-left: -1px; white-space: nowrap; }
.t1 { width: 56px; border-right: 0; margin-left: 0; }
.t2 { width: 58px; height: 21px; background: #fff; padding: 2px 3px 0; border-bottom: 1px solid #fff; line-height: 15px; }
.t3 { width: 52px; margin-left: 0; border-left: 0; }
.t4 { width: 73px; }
.focus { display: block; border: 1px dotted #222; height: 16px; }
.panel { flex: 1; background: #fff; border: 1px solid #d9d9d9; padding: 7px 6px 0 8px; min-height: 0; }
.p-top { line-height: 15px; }
.fs { display: flex; align-items: center; gap: 8px; margin-left: 18px; line-height: 14px; height: 14px; white-space: nowrap; }
.fs i { flex: 1; height: 1px; background: #dcdcdc; }
.row-size { display: flex; align-items: center; height: 19px; margin: 4px 0 0 28px; }
.chk { display: flex; align-items: center; white-space: nowrap; gap: 3px; font-weight: 400; }
.box { width: 13px; height: 13px; border: 1px solid #333; background: #fff; flex: none; }
.inp { width: 83px; height: 18px; margin-left: 9px; border: 1px solid #b9b9b9; display: flex; background: #fff; }
.inp-v { flex: 1; background: linear-gradient(#d0dbe9,#c4d2e6); color: #6d6d6d; padding-left: 2px; line-height: 16px; }
.inp-s { width: 17px; display: flex; align-items: center; justify-content: center; background: #f2f2f2; }
.dis { margin-left: 11px; color: #7a7a7a; white-space: nowrap; }
.sel-box { margin-left: auto; width: 92px; height: 21px; border: 1px solid #b9b9b9; background: #e6e6e6; color: #777; display: flex; justify-content: space-between; padding-left: 3px; line-height: 19px; }
.sel-a { width: 17px; background: #ccc; border-left: 1px solid #c0c0c0; display: flex; align-items: center; justify-content: center; }
.fs2 { margin-top: 8px; }
.c-opt { margin: 7px 0 0 28px; height: 15px; }
.c-opt2 { margin: 2px 0 0 28px; height: 15px; }
.prevnext { display: flex; gap: 10px; margin-top: 15px; }
.btn { width: 74px; height: 21px; display: flex; align-items: center; justify-content: center; background: #e3e3e3; border: 1px solid #adadad; line-height: 18px; white-space: nowrap; }
.pn { width: 82px; justify-content: flex-start; padding-left: 4px; gap: 6px; }
.dlg-f { height: 30px; flex: none; display: flex; justify-content: flex-end; gap: 10px; padding-top: 10px; margin-right: -1px; }
.dlg-f .btn { height: 20px; }
.ok { border: 2px solid #2a76bd; background: #e6edf5; }
```
